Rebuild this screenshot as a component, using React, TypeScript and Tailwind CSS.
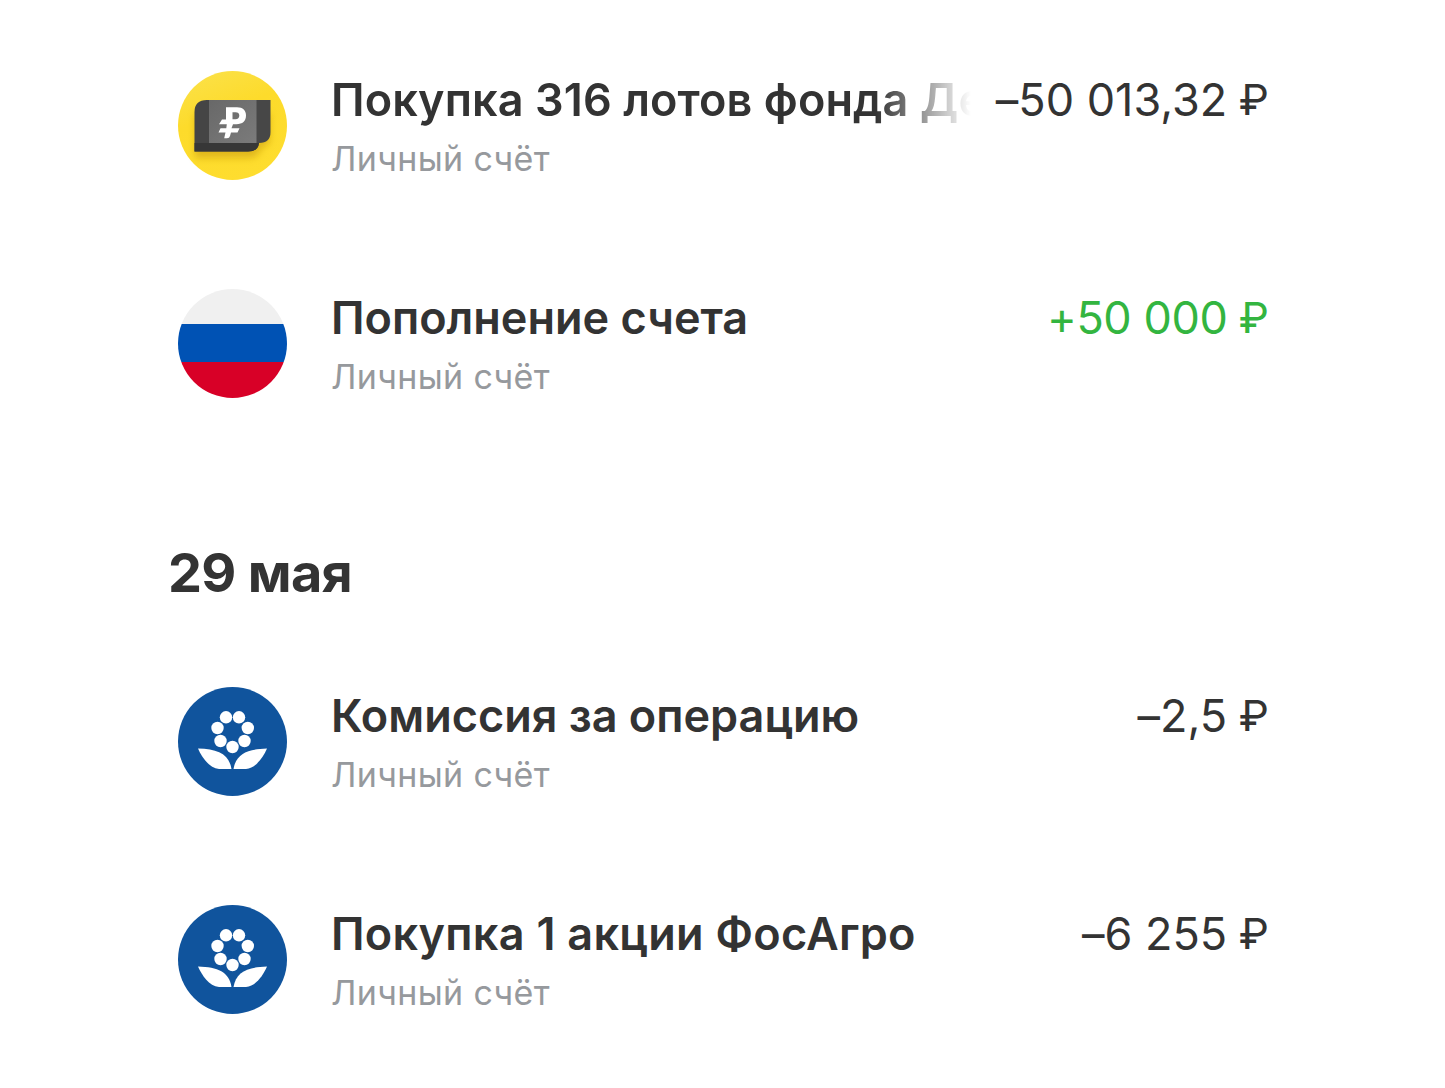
import React from "react";

function FundIcon() {
  return (
    <svg viewBox="0 0 109 109" className="block size-[109px] shrink-0">
      <defs>
        <linearGradient id="fundBg" x1="0.2" y1="0" x2="0.6" y2="1">
          <stop offset="0" stopColor="#fbe148" />
          <stop offset="0.4" stopColor="#fddb2b" />
          <stop offset="1" stopColor="#fedd2f" />
        </linearGradient>
        <linearGradient id="note" x1="0" y1="0" x2="1" y2="1">
          <stop offset="0" stopColor="#686868" />
          <stop offset="1" stopColor="#7b7b7b" />
        </linearGradient>
        <filter id="soft" x="-20%" y="-20%" width="140%" height="160%">
          <feGaussianBlur stdDeviation="3.5" />
        </filter>
      </defs>
      <circle cx="54.5" cy="54.5" r="54.5" fill="url(#fundBg)" />
      <path d="M17 42H92V69Q91 75 84 76Q80 87 73 87H17Z" fill="#c79a10" opacity="0.55" filter="url(#soft)" />
      <path d="M28 29H92.500V61Q92.500 72 81 72H28Z" fill="#474747" />
      <path d="M16.500 41Q16.500 29 29 29H31V72H81Q80 80.500 70 80.500H16.500Z" fill="#454545" />
      <path d="M16.500 72H81Q80 80.500 70 80.500H16.500Z" fill="#373737" />
      <path d="M31 29H78.500V72H31Z" fill="url(#note)" />
      <path
        fillRule="evenodd"
        d="M48 36.200H59C65 36.200 68 39.500 68 44.500C68 50 64.500 53.200 58.500 53.200H55L53.500 57.300H61.500L59.500 61.500H53L52 65Q51.500 67.300 49 67.300H46.200L47.500 61.500H40.500L42.500 57.300H48.300L48.800 53.200H41L44 48.500H48ZM54.500 41.200V48.300H57.500C60 48.300 61.300 47 61.300 44.600C61.300 42.300 60 41.200 57.500 41.200Z"
        fill="#fff"
      />
    </svg>
  );
}

function FlagIcon() {
  return (
    <div className="flex size-[109px] shrink-0 flex-col overflow-hidden rounded-full">
      <div className="h-[35px] bg-[#f0f0f0]" />
      <div className="h-[38px] bg-[#0052b4]" />
      <div className="flex-1 bg-[#d80027]" />
    </div>
  );
}

const PETALS = [
  [48, 30.3], [61, 30.3], [39.5, 41], [69.8, 41], [42.5, 54], [66.5, 54], [54.5, 60],
];

function PhosAgroIcon() {
  return (
    <svg viewBox="0 0 109 109" className="block size-[109px] shrink-0">
      <circle cx="54.5" cy="54.5" r="54.5" fill="#10549d" />
      <g fill="#fff">
        {PETALS.map(([x, y]) => (
          <circle key={`${x}-${y}`} cx={x} cy={y} r="6.2" />
        ))}
        <path d="M20 61.500C40 62 51 67 53.500 82H41C31 81 24 70.500 20 61.500Z" />
        <path d="M89 61.500C69 62 58 67 55.500 82H68C78 81 85 70.500 89 61.500Z" />
      </g>
    </svg>
  );
}

type Operation = {
  icon: React.ReactNode;
  title: string;
  tracking?: string;
  amount: string;
  income?: boolean;
  faded?: boolean;
};

function Row({ icon, title, tracking = "", amount, income, faded }: Operation) {
  return (
    <li className="flex h-[109px] items-start">
      {icon}
      <div className="ml-[44px] w-[640px] shrink-0">
        <div
          className={`overflow-hidden whitespace-nowrap text-[45px] leading-[57px] font-semibold text-[#333333] ${tracking} ${
            faded ? "[mask-image:linear-gradient(to_right,black_545px,transparent_640px)]" : ""
          }`}
        >
          {title}
        </div>
        <div className="mt-[11px] text-[34px] leading-[40px] tracking-[0.36px] text-[#96999d]">Личный счёт</div>
      </div>
      <div
        className={`flex-1 whitespace-nowrap text-right text-[45px] leading-[57px] [font-feature-settings:'calt'_0] ${
          income ? "tracking-[-0.4px] text-[#33b540]" : "text-[#333333]"
        }`}
      >
        {amount} <span className="relative -top-px -ml-px text-[43px] leading-none tracking-normal">₽</span>
      </div>
    </li>
  );
}

export default function App() {
  return (
    <main className="h-[1088px] overflow-hidden bg-white pt-[71px] pr-[176px] pl-[178px] font-['Inter',sans-serif]">
      <ul className="flex flex-col gap-[109px]">
        <Row
          icon={<FundIcon />}
          title="Покупка 316 лотов фонда Де"
          tracking="tracking-[0.1px]"
          amount="–50 013,32"
          faded
        />
        <Row icon={<FlagIcon />} title="Пополнение счета" amount="+50 000" income />
      </ul>
      <h2 className="mt-[135px] -ml-[10px] text-[54px] leading-[80px] font-bold tracking-[-0.7px] text-[#333333]">
        29 мая
      </h2>
      <ul className="mt-[74px] flex flex-col gap-[109px]">
        <Row icon={<PhosAgroIcon />} title="Комиссия за операцию" amount="–2,5" />
        <Row
          icon={<PhosAgroIcon />}
          title="Покупка 1 акции ФосАгро"
          tracking="tracking-[0.27px]"
          amount="–6 255"
        />
      </ul>
    </main>
  );
}
